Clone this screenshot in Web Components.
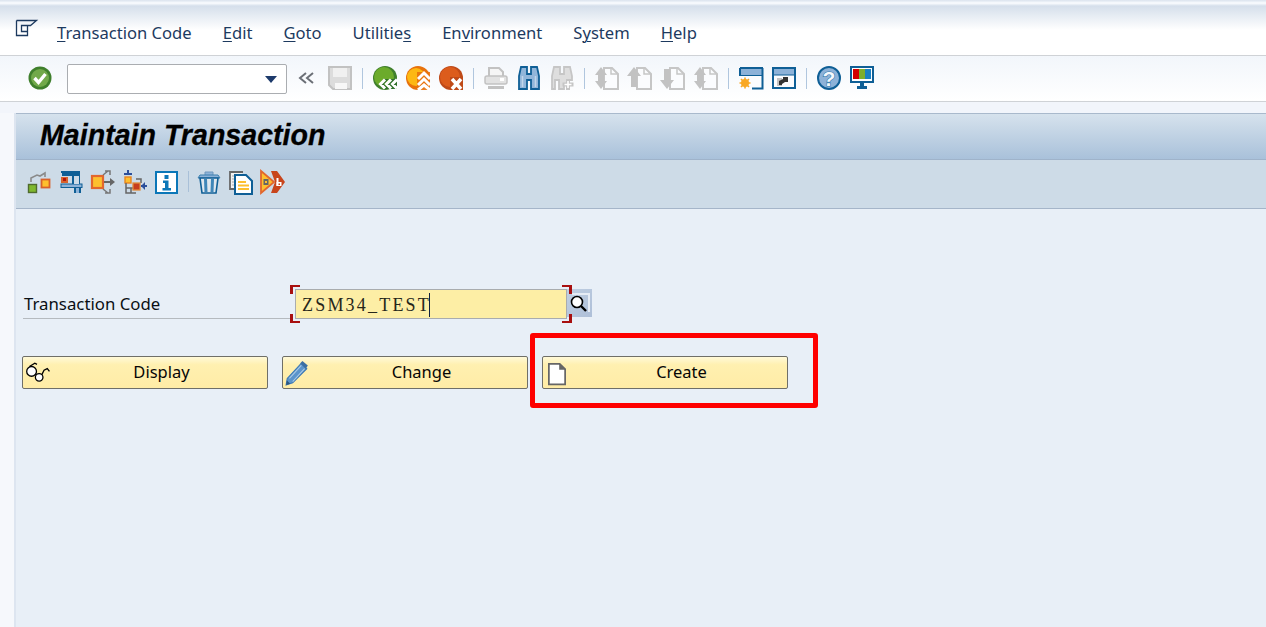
<!DOCTYPE html>
<html lang="en">
<head>
<meta charset="utf-8">
<title>Maintain Transaction</title>
<style>
html,body{margin:0;height:627px;overflow:hidden;background:#f6f8fc;font-family:"Noto Sans",sans-serif;}
sap-screen{height:627px;}
</style>
</head>
<body>
<sap-screen>
  <sap-menubar slot="menu">
    <sap-menu key="T" rest="ransaction Code"></sap-menu>
    <sap-menu key="E" rest="dit"></sap-menu>
    <sap-menu key="G" rest="oto"></sap-menu>
    <sap-menu before="Utilitie" key="s"></sap-menu>
    <sap-menu before="En" key="v" rest="ironment"></sap-menu>
    <sap-menu before="S" key="y" rest="stem"></sap-menu>
    <sap-menu key="H" rest="elp"></sap-menu>
  </sap-menubar>
  <sap-systembar slot="system">
    <sap-icon name="check"></sap-icon>
    <sap-combo></sap-combo>
    <sap-icon name="chevrons" style="margin-left:3px"></sap-icon>
    <sap-icon name="save"></sap-icon>
    <sap-sep></sap-sep>
    <sap-icon name="back"></sap-icon>
    <sap-icon name="exit"></sap-icon>
    <sap-icon name="cancel"></sap-icon>
    <sap-sep></sap-sep>
    <sap-icon name="print"></sap-icon>
    <sap-icon name="find"></sap-icon>
    <sap-icon name="findnext"></sap-icon>
    <sap-sep></sap-sep>
    <sap-icon name="first"></sap-icon>
    <sap-icon name="prev"></sap-icon>
    <sap-icon name="next"></sap-icon>
    <sap-icon name="last"></sap-icon>
    <sap-sep></sap-sep>
    <sap-icon name="session"></sap-icon>
    <sap-icon name="shortcut"></sap-icon>
    <sap-sep></sap-sep>
    <sap-icon name="help"></sap-icon>
    <sap-icon name="monitor"></sap-icon>
  </sap-systembar>
  <sap-title slot="title">Maintain Transaction</sap-title>
  <sap-apptools slot="tools">
    <sap-icon small name="relate"></sap-icon>
    <sap-icon small name="where"></sap-icon>
    <sap-icon small name="spread"></sap-icon>
    <sap-icon small name="tree"></sap-icon>
    <sap-icon small name="info"></sap-icon>
    <sap-sep small></sap-sep>
    <sap-icon small name="trash"></sap-icon>
    <sap-icon small name="copy"></sap-icon>
    <sap-icon small name="compare"></sap-icon>
  </sap-apptools>
  <sap-field label="Transaction Code" value="ZSM34_TEST"></sap-field>
  <sap-actions>
    <sap-button icon="glasses">Display</sap-button>
    <sap-button icon="pencil">Change</sap-button>
    <sap-button icon="doc">Create</sap-button>
    <sap-highlight></sap-highlight>
  </sap-actions>
</sap-screen>

<script>
// all icons are drawn on a 24x24 box, centre 12,12
const G='#c6c6c6';
function pageDoc(){return `<path d="M9 2h8l6 6v15H9z" fill="#fbfcfe" stroke="${G}" stroke-width="2"/><path d="M16 2v6h7" fill="none" stroke="${G}" stroke-width="1.500"/>`;}
const twoArrows=`<path d="M0 9l6-8 6 8H9v3H3V9zM0 15l6 8 6-8H9v-3H3v3z" fill="#c2c2c2"/>`;
const ICONS={
check:`<circle cx="12" cy="12" r="11.500" fill="#3f7f2c"/><circle cx="12" cy="12" r="9" fill="#72a94a"/><path d="M6.500 12l4 4.500 7-8.500" fill="none" stroke="#fff" stroke-width="3.400"/>`,
chevrons:`<path d="M11 7l-6 5 6 5M18 7l-6 5 6 5" fill="none" stroke="#6b6f76" stroke-width="2"/>`,
save:`<path d="M1 1h22v22H5l-4-4z" fill="#dcdcdc" stroke="#c2c2c2" stroke-width="2"/><rect x="5" y="2" width="14" height="9" fill="#f0f0f0"/><rect x="7" y="17" width="12" height="6" fill="#f7f7f7"/>`,
back:`<circle cx="12" cy="12" r="12" fill="#3f7f2c"/><circle cx="11" cy="11" r="10" fill="#6cab2b"/><path d="M12 13l-5 5 5 5h4l-5-5 5-5zM18 13l-5 5 5 5h6v-10z" fill="#2f6f2a"/><path d="M12 13.500l-4.500 4.500 4.500 4.500M18 13.500l-4.500 4.500 4.500 4.500M24 13.500l-4.500 4.500 4.500 4.500" fill="none" stroke="#fff" stroke-width="3"/>`,
exit:`<circle cx="12" cy="12" r="12" fill="#e8720c"/><circle cx="10" cy="11" r="9" fill="#fdb813"/><path d="M11 6h13v18H11z" fill="#e8720c" opacity=".9"/><path d="M12 13l6-6 6 6M12 19l6-6 6 6M12 24l6-5 6 5" fill="none" stroke="#fff" stroke-width="3"/>`,
cancel:`<circle cx="12" cy="12" r="12" fill="#bf4a18"/><circle cx="11" cy="11" r="10" fill="#dc5c1c"/><rect x="11" y="11" width="13" height="13" fill="#bf4a18"/><path d="M13 13l9 10M22 13l-9 10" stroke="#fff" stroke-width="3.600"/>`,
print:`<path d="M5 2h10l4 4v5H5z" fill="#f5f5f5" stroke="#c2c2c2" stroke-width="2"/><rect x="1" y="10" width="22" height="8" rx="2" fill="#e2e2e2" stroke="#c2c2c2" stroke-width="1.500"/><rect x="16" y="12" width="4" height="3" fill="#fff"/><rect x="4" y="20" width="16" height="3" fill="#c2c2c2"/>`,
find:`<path d="M2 23V10L4 1h6v7h4V1h6l2 9v13h-8V14h-4v9z" fill="#92b6da" stroke="#0f5f96" stroke-width="1.800"/><path d="M5.500 21V10M18.500 21V10" stroke="#c2d6ea" stroke-width="1.500"/>`,
findnext:`<path d="M2 23V10L4 1h6v7h4V1h6l2 9v4h-4l-1 4-3 1v4h-5V14h-4v9z" fill="#dedede" stroke="#c6c6c6" stroke-width="1.800"/><path d="M18 13v11M12.500 18.500h11" stroke="#c6c6c6" stroke-width="4"/><path d="M18 15v7M14.500 18.500h7" stroke="#fff" stroke-width="1.600"/>`,
first:pageDoc()+twoArrows,
prev:pageDoc()+`<path d="M-1 10l7-9 7 9H9v11H3V10z" fill="#c2c2c2"/>`,
next:pageDoc()+`<path d="M-1 14l7 9 7-9H9V3H3v11z" fill="#c2c2c2"/>`,
last:pageDoc()+twoArrows,
session:`<rect x="1" y="2" width="22" height="21" fill="#fbfcfe"/><rect x="1" y="1" width="23" height="9" fill="#0f5f96"/><rect x="1" y="3" width="22" height="6" fill="#8db2d8"/><path d="M13 22.500h10.500V2" fill="none" stroke="#0f5f96" stroke-width="2"/><path d="M1 2v8" stroke="#0f5f96" stroke-width="2"/><circle cx="6" cy="17" r="4" fill="#f9a825"/><path d="M6 11.500v11M.5 17h11M2 13l8 8M10 13l-8 8" stroke="#f9a825" stroke-width="1.600"/>`,
shortcut:`<rect x="1" y="2" width="22" height="20" fill="#fbfcfe" stroke="#0f5f96" stroke-width="2"/><rect x="2" y="3" width="20" height="6" fill="#8db2d8"/><path d="M2 9h20" stroke="#0f5f96" stroke-width="1"/><rect x="5" y="12" width="5" height="8" fill="#c4c4c4"/><path d="M7 19v-4l4-2V11h5v5h-3l-3 2v1z" fill="#333"/>`,
help:`<circle cx="12" cy="12" r="11" fill="#8db2d8" stroke="#0f5f96" stroke-width="2"/><text x="12" y="19.500" text-anchor="middle" font-family="Liberation Sans" font-weight="700" font-size="21" fill="#f4f8fc" stroke="#2f78ac" stroke-width="1.200" paint-order="stroke">?</text>`,
monitor:`<rect x="1" y="1" width="22" height="15" fill="#fff" stroke="#0f5f96" stroke-width="2"/><rect x="3" y="3" width="6" height="10" fill="#d40000"/><rect x="9" y="3" width="6" height="10" fill="#7fae2e"/><rect x="15" y="3" width="6" height="10" fill="#1b80c4"/><rect x="10" y="17" width="4" height="3" fill="#0f5f96"/><rect x="7" y="20" width="10" height="3" fill="#0f5f96"/>`,
relate:`<rect x="1.500" y="14.500" width="8" height="8" fill="#7fb82e" stroke="#4f6b2f" stroke-width="1.400"/><rect x="14.500" y="9.500" width="8" height="8" fill="#fdc02f" stroke="#d8622c" stroke-width="1.800"/><path d="M4 12V8l6-3 3 1 5-3v4" fill="none" stroke="#8a8a8a" stroke-width="1.600"/>`,
where:`<path d="M2 2h18v21" fill="none" stroke="#0f5f96" stroke-width="2"/><rect x="3" y="3" width="17" height="3" fill="#0f5f96"/><rect x="2" y="14" width="21" height="3.500" fill="#8db2d8" stroke="#0f5f96"/><rect x="2" y="7" width="7" height="6" fill="#d8622c"/><rect x="4" y="8" width="3" height="3" fill="#b3160b"/><rect x="13" y="5" width="2" height="9" fill="#0f5f96"/><rect x="15" y="6" width="5" height="8" fill="#cddbe7"/><rect x="15" y="18" width="2" height="5" fill="#0f5f96"/><rect x="17" y="18" width="3" height="5" fill="#8db2d8"/><rect x="20" y="18" width="2" height="5" fill="#0f5f96"/>`,
spread:`<rect x="1" y="6" width="11" height="12" fill="#fdc02f" stroke="#e2672e" stroke-width="2.200"/><path d="M13 12h8" stroke="#666" stroke-width="2"/><path d="M19 8l5 4-5 4z" fill="#666"/><path d="M12 5l5-4M14 1h5v4M12 19l5 4M14 23h5v-4" fill="none" stroke="#777" stroke-width="1.500"/>`,
tree:`<path d="M5 0v5" stroke="#2c4f9a" stroke-width="2"/><path d="M1 4h8" stroke="#2c4f9a" stroke-width="2"/><rect x="2" y="7" width="6" height="6" fill="#fdc02f" stroke="#e8851e" stroke-width="1.400"/><path d="M3 13v10h10M3 18h10M8 18v5M13 9h5v4" fill="none" stroke="#666" stroke-width="1.500"/><rect x="10" y="13" width="7" height="7" fill="#c73d1d" stroke="#e08a3a" stroke-width="1.300"/><path d="M18 16h6" stroke="#2c4f9a" stroke-width="2"/><path d="M22 12l-4 4 4 4z" fill="#2c4f9a"/>`,
info:`<rect x="1" y="2" width="21" height="21" fill="#fff" stroke="#0b77b8" stroke-width="2"/><rect x="9.500" y="5" width="4" height="4" fill="#0b77b8"/><path d="M8 10.500h5.500V18H16v2.500H7.500V18H10v-5H8z" fill="#0b77b8"/>`,
trash:`<path d="M8 5V2h8v3" fill="#8db2d8" stroke="#6f97bd"/><path d="M1 8l2-3h18l2 3z" fill="#8db2d8" stroke="#3a7fae"/><path d="M3 8h18l-2 15H5z" fill="#dfe7ee" stroke="#0f5f96" stroke-width="1.600"/><path d="M8.500 9l.5 13M15.500 9l-.5 13" stroke="#3f86b8" stroke-width="3"/>`,
copy:`<path d="M14 2H1v17h5" fill="#f2f2f2" stroke="#666" stroke-width="1.800"/><path d="M3 6h3M3 9h3M3 12h3M3 15h3" stroke="#aaa" stroke-width="1"/><path d="M6 5h11l6 6v13H6z" fill="#fff" stroke="#0f5f96" stroke-width="2"/><path d="M9 12h8M9 15.500h11M9 19h11" stroke="#fdc02f" stroke-width="2"/>`,
compare:`<path d="M0 1l13 11L0 23z" fill="#fdc02f" stroke="#e2672e" stroke-width="1.800"/><rect x="2.500" y="9" width="5" height="6" fill="#666"/><rect x="4" y="11" width="2" height="2" fill="#fdc02f"/><path d="M10 1h6l8 11-8 11h-6l4-11z" fill="#c8451c"/><rect x="15.500" y="8" width="2" height="8" fill="#fff"/><rect x="15.500" y="12" width="5" height="4" fill="#fff"/><rect x="17.500" y="13.500" width="1.500" height="1.500" fill="#c8451c"/>`,
glasses:`<g fill="#fff" stroke="#000" stroke-width="1.200"><circle cx="7" cy="10.500" r="4.500"/><circle cx="14" cy="16" r="3.500"/></g><path d="M5 6l5-3 2 1M16.500 13.500l2-4 3-1.500 2 2.500" fill="none" stroke="#000" stroke-width="1.200"/>`,
pencil:`<path d="M2 23l1-6L16 3l5 5L8 21z" fill="#5b94cb" stroke="#3b78b4" stroke-width="1"/><path d="M15 3l2-2 5 4-2 3z" fill="#3c6fa4"/><path d="M5 17l11-12M8 20l11-12" stroke="#a9c8e6" stroke-width="1"/><path d="M2 23l.7-4 3 3z" fill="#2c5680"/>`,
doc:`<path d="M4.500 3.500h10l5 5v14h-15z" fill="#fff" stroke="#666" stroke-width="1.600"/><path d="M14 3v6h6z" fill="#666"/>`
};

class SapIcon extends HTMLElement{
  constructor(){
    super();
    const small=this.hasAttribute("small");
    this.attachShadow({mode:"open"}).innerHTML=`<style>
      :host{display:flex;align-items:center;justify-content:center;flex:none;box-sizing:border-box;
        width:${small?32:33}px;height:${small?24:26}px;padding-bottom:${small?0:2}px;}
      svg{display:block;flex:none;width:24px;height:24px;overflow:visible;}
    </style><svg viewBox="0 0 24 24">${ICONS[this.getAttribute("name")]||""}</svg>`;
  }
}
class SapSep extends HTMLElement{
  constructor(){
    super();
    const small=this.hasAttribute("small");
    this.attachShadow({mode:"open"}).innerHTML=`<style>
      :host{display:flex;align-items:center;justify-content:center;flex:none;width:${small?10:12}px;padding-bottom:${small?0:2}px;}
      i{display:block;width:1px;height:21px;background:${small?"#a9c0d8":"#b0c6de"};}
    </style><i></i>`;
  }
}
class SapMenu extends HTMLElement{
  constructor(){
    super();
    const a=n=>this.getAttribute(n)||"";
    this.attachShadow({mode:"open"}).innerHTML=`<style>
      :host{display:block;white-space:nowrap;}
      u{text-underline-offset:2px;text-decoration-thickness:1px;}
    </style>${a("before")}<u>${a("key")}</u>${a("rest")}`;
  }
}
class SapMenubar extends HTMLElement{
  constructor(){
    super();
    this.attachShadow({mode:"open"}).innerHTML=`<style>
      :host{display:flex;align-items:flex-start;box-sizing:border-box;height:56px;
        border-bottom:1px solid #cfd2d6;color:#1d3a5f;font:16.600px "Noto Sans",sans-serif;
        background:linear-gradient(#dbe3ee 0,#eef3f9 2px,#fbfdff 3px,#d5dfeb 6px,#ffffff 30px);}
      .ico{width:26px;height:22px;margin:17px 0 0 14px;flex:none;}
      .items{display:flex;gap:31px;margin:21px 0 0 17px;}
    </style>
    <svg class="ico" viewBox="0 0 26 22"><path d="M2.500 3.500h20l-6 5H7.500v6h6v-6M2.500 3.500v15h11v-4" fill="none" stroke="#1d3a5f" stroke-width="1.300"/></svg>
    <div class="items"><slot></slot></div>`;
  }
}
class SapCombo extends HTMLElement{
  constructor(){
    super();
    this.attachShadow({mode:"open"}).innerHTML=`<style>
      :host{display:flex;align-items:center;justify-content:flex-end;flex:none;box-sizing:border-box;
        width:220px;height:30px;margin-left:11px;padding-right:9px;background:#fff;border:1px solid #aaadb1;border-radius:2px;}
      i{width:0;height:0;border:6.500px solid transparent;border-top:7px solid #1d3a6b;border-bottom:0;}
    </style><i></i>`;
  }
}
class SapSystembar extends HTMLElement{
  constructor(){
    super();
    this.attachShadow({mode:"open"}).innerHTML=`<style>
      :host{display:flex;align-items:center;box-sizing:border-box;height:46px;padding:1px 0 0 23px;
        border-bottom:1px solid #cfd2d6;background:linear-gradient(#f2f6fb,#ffffff);}
    </style><slot></slot>`;
  }
}
class SapTitle extends HTMLElement{
  constructor(){
    super();
    this.attachShadow({mode:"open"}).innerHTML=`<style>
      :host{display:flex;align-items:center;box-sizing:border-box;height:47px;padding:0 0 3px 24px;
        border-top:1px solid #a9b9cc;border-bottom:1px solid #9fb3ca;
        background:linear-gradient(#d6e2ed,#a9c1da);color:#000;-webkit-text-stroke:.3px #000;
        font:italic 700 28.600px "Liberation Sans",sans-serif;}
    </style><slot></slot>`;
  }
}
class SapApptools extends HTMLElement{
  constructor(){
    super();
    this.attachShadow({mode:"open"}).innerHTML=`<style>
      :host{display:flex;align-items:center;box-sizing:border-box;height:49px;padding:0 0 5px 7px;
        background:#cddbe7;border-bottom:1px solid #a5b5c9;}
    </style><slot></slot>`;
  }
}
class SapField extends HTMLElement{
  constructor(){
    super();
    this.attachShadow({mode:"open"}).innerHTML=`<style>
      :host{display:flex;align-items:flex-start;height:32px;margin:80px 0 0 7px;}
      .label{box-sizing:border-box;flex:none;width:268px;height:30px;padding:3px 0 0 1px;
        border-bottom:1px solid #b5babf;color:#0a0f14;font:16.800px/24px "Noto Sans",sans-serif;}
      .wrap{position:relative;flex:none;box-sizing:border-box;width:272px;height:30px;margin-left:4px;
        background:#fdeea5;border:1px solid #a9acae;color:#26261a;
        font:18px/30px "Liberation Serif",serif;letter-spacing:2.200px;padding-left:6px;}
      .caret{display:inline-block;width:1px;height:24px;background:#102040;vertical-align:-6px;margin-left:-2px;}
      .b{position:absolute;width:7px;height:7px;border:0 solid #a80f0f;}
      .tl{left:-6px;top:-5px;border-width:2px 0 0 3px;}
      .bl{left:-6px;bottom:-5px;border-width:0 0 2px 3px;}
      .tr{right:-6px;top:-5px;border-width:2px 3px 0 0;}
      .br{right:-6px;bottom:-5px;border-width:0 3px 2px 0;}
      .help{flex:none;width:25px;height:28px;background:linear-gradient(135deg,#c0cfe2,#aebfd8);}
      .help svg{display:block;width:25px;height:28px;}
    </style>
    <div class="label">${this.getAttribute("label")}</div>
    <div class="wrap">${this.getAttribute("value")}<span class="caret"></span>
      <i class="b tl"></i><i class="b bl"></i><i class="b tr"></i><i class="b br"></i>
    </div>
    <div class="help"><svg viewBox="0 0 25 28"><path d="M5 5h17v18" fill="none" stroke="#e6ecf5" stroke-width="2"/><circle cx="10" cy="13" r="5.500" fill="#fff" stroke="#000" stroke-width="1.600"/><path d="M14 17l5 5" stroke="#000" stroke-width="2.400"/></svg></div>`;
  }
}
class SapActions extends HTMLElement{
  constructor(){
    super();
    this.attachShadow({mode:"open"}).innerHTML=`<style>
      :host{display:flex;position:relative;gap:14px;margin:35px 0 0 6px;}
    </style><slot></slot>`;
  }
}
class SapButton extends HTMLElement{
  constructor(){
    super();
    this.attachShadow({mode:"open"}).innerHTML=`<style>
      :host{display:flex;align-items:center;flex:none;box-sizing:border-box;width:246px;height:33px;padding-left:1px;
        border:1px solid #6f6f68;border-radius:2px;color:#060606;font:16.500px "Noto Sans",sans-serif;
        background:linear-gradient(#fff9d8,#fff0b0 25%,#ffeca6);}
      svg{flex:none;width:26px;height:26px;margin-right:6px;}
      span{flex:1;text-align:center;padding-bottom:3px;}
    </style><svg viewBox="0 0 24 24">${ICONS[this.getAttribute("icon")]}</svg><span><slot></slot></span>`;
  }
}
class SapHighlight extends HTMLElement{
  constructor(){
    super();
    // annotation drawn over the Create button
    this.attachShadow({mode:"open"}).innerHTML=`<style>
      :host{position:absolute;left:508px;top:-23px;box-sizing:border-box;width:288px;height:75px;
        border:5px solid #fe0000;border-radius:3px;pointer-events:none;}
    </style>`;
  }
}
class SapScreen extends HTMLElement{
  constructor(){
    super();
    this.attachShadow({mode:"open"}).innerHTML=`<style>
      :host{display:block;}
      .gap{height:11px;background:#f2f5fb;}
      main{height:514px;margin-left:14px;border-left:2px solid #dde5f0;background:#e8eff7;}
    </style>
    <slot name="menu"></slot><slot name="system"></slot>
    <div class="gap"></div>
    <main><slot name="title"></slot><slot name="tools"></slot><slot></slot></main>`;
  }
}
customElements.define("sap-icon",SapIcon);
customElements.define("sap-sep",SapSep);
customElements.define("sap-menu",SapMenu);
customElements.define("sap-menubar",SapMenubar);
customElements.define("sap-combo",SapCombo);
customElements.define("sap-systembar",SapSystembar);
customElements.define("sap-title",SapTitle);
customElements.define("sap-apptools",SapApptools);
customElements.define("sap-field",SapField);
customElements.define("sap-actions",SapActions);
customElements.define("sap-button",SapButton);
customElements.define("sap-highlight",SapHighlight);
customElements.define("sap-screen",SapScreen);
</script>
</body>
</html>
